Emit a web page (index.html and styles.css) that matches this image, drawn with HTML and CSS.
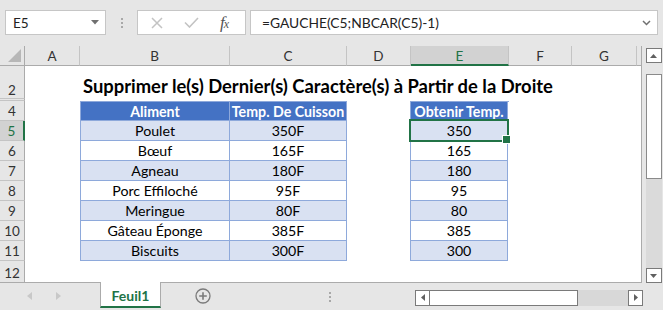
FILE: index.html
```html
<!DOCTYPE html>
<html lang="fr">
<head>
<meta charset="utf-8">
<title>Feuil1</title>
<link rel="stylesheet" href="styles.css">
</head>
<body>
<div class="app">
  <div class="fbar">
    <div class="namebox">
      <span class="ref">E5</span>
      <svg class="nb-arrow" width="8" height="5" viewBox="0 0 8 5"><path d="M0 0h8L4 4.5z" fill="#707070"/></svg>
    </div>
    <div class="grip"><i></i><i></i><i></i></div>
    <div class="fxbox">
      <svg class="ic-x" width="12" height="12" viewBox="0 0 12 12"><path d="M1 1L11 11M11 1L1 11" stroke="#c3c3c3" stroke-width="1.5" fill="none"/></svg>
      <svg class="ic-ok" width="15" height="11" viewBox="0 0 15 11"><path d="M1 5.5L5.5 10L14 1" stroke="#c3c3c3" stroke-width="1.6" fill="none"/></svg>
      <span class="fx">f<small>x</small></span>
    </div>
    <div class="formula">
      <span class="ftext">=GAUCHE(C5;NBCAR(C5)-1)</span>
      <svg class="chev" width="9" height="6" viewBox="0 0 9 6"><path d="M1 1L4.5 4.5L8 1" stroke="#707070" stroke-width="1.5" fill="none"/></svg>
    </div>
  </div>

  <div class="main">
    <div class="sheet">
      <div class="ch corner"><svg width="13" height="13" viewBox="0 0 13 13"><path d="M13 0V13H0z" fill="#b7b7b7"/></svg></div>
      <div class="ch">A</div>
      <div class="ch">B</div>
      <div class="ch">C</div>
      <div class="ch">D</div>
      <div class="ch ch-sel">E</div>
      <div class="ch">F</div>
      <div class="ch">G</div>
      <div class="ch ch-end"></div>

      <div class="rh r2">2</div>
      <div class="rh r3"></div>
      <div class="rh r4">4</div>
      <div class="rh r5 rh-sel">5</div>
      <div class="rh r6">6</div>
      <div class="rh r7">7</div>
      <div class="rh r8">8</div>
      <div class="rh r9">9</div>
      <div class="rh r10">10</div>
      <div class="rh r11">11</div>
      <div class="rh r12">12</div>

      <div class="title">Supprimer le(s) Dernier(s) Caractère(s) à Partir de la Droite</div>

      <div class="tbl tbl-bc">
        <div class="th">Aliment</div><div class="th">Temp. De Cuisson</div>
        <div class="td band">Poulet</div><div class="td band">350F</div>
        <div class="td">Bœuf</div><div class="td">165F</div>
        <div class="td band">Agneau</div><div class="td band">180F</div>
        <div class="td">Porc Effiloché</div><div class="td">95F</div>
        <div class="td band">Meringue</div><div class="td band">80F</div>
        <div class="td">Gâteau Éponge</div><div class="td">385F</div>
        <div class="td band">Biscuits</div><div class="td band">300F</div>
      </div>

      <div class="tbl tbl-e">
        <div class="th">Obtenir Temp.</div>
        <div class="td band sel">350</div>
        <div class="td">165</div>
        <div class="td band">180</div>
        <div class="td">95</div>
        <div class="td band">80</div>
        <div class="td">385</div>
        <div class="td band">300</div>
      </div>
    </div>

    <div class="vscroll">
      <div class="sbtn up"><svg width="7" height="4" viewBox="0 0 7 4"><path d="M0 4L3.5 0L7 4z" fill="#606060"/></svg></div>
      <div class="vthumb"></div>
      <div class="vspace"></div>
      <div class="sbtn down"><svg width="7" height="4" viewBox="0 0 7 4"><path d="M0 0L3.5 4L7 0z" fill="#606060"/></svg></div>
    </div>
  </div>

  <div class="tabbar">
    <div class="nav">
      <svg width="5" height="8" viewBox="0 0 5 8"><path d="M5 0V8L0 4z" fill="#c8c8c8"/></svg>
      <svg width="5" height="8" viewBox="0 0 5 8"><path d="M0 0V8L5 4z" fill="#c8c8c8"/></svg>
    </div>
    <div class="tab">Feuil1</div>
    <div class="addsheet">
      <svg width="16" height="16" viewBox="0 0 16 16"><circle cx="8" cy="8" r="7" fill="none" stroke="#7a7a7a" stroke-width="1.3"/><path d="M8 4.2V11.8M4.2 8H11.8" stroke="#7a7a7a" stroke-width="1.6"/></svg>
    </div>
    <div class="hgrip"><i></i><i></i><i></i></div>
    <div class="hscroll">
      <div class="sbtn left"><svg width="4" height="7" viewBox="0 0 4 7"><path d="M4 0V7L0 3.5z" fill="#606060"/></svg></div>
      <div class="hthumb"></div>
      <div class="htrack"></div>
      <div class="sbtn right"><svg width="4" height="7" viewBox="0 0 4 7"><path d="M0 0V7L4 3.5z" fill="#606060"/></svg></div>
    </div>
  </div>
</div>
</body>
</html>
```

FILE: styles.css
```css
* { box-sizing: border-box; }
html, body { margin: 0; padding: 0; }
body {
  width: 663px;
  height: 310px;
  overflow: hidden;
  background: #e6e6e6;
  font-family: Lato, "Open Sans", sans-serif;
  color: #000;
}
.app { width: 663px; height: 310px; display: flex; flex-direction: column; }

/* formula bar */
.fbar {
  height: 46px;
  display: flex;
  align-items: flex-start;
  padding: 10px 5px 0 5px;
}
.namebox {
  width: 101px;
  height: 25px;
  background: #fff;
  border: 1px solid #c6c6c6;
  display: flex;
  align-items: center;
  justify-content: space-between;
  padding: 0 6px 0 7px;
  font-size: 13.5px;
  color: #222;
}
.grip {
  width: 31px;
  height: 25px;
  display: flex;
  flex-direction: column;
  align-items: center;
  justify-content: center;
  gap: 2px;
}
.grip i, .hgrip i { display: block; width: 2px; height: 2px; background: #a8a8a8; }
.fxbox {
  width: 109px;
  height: 25px;
  background: #fff;
  border: 1px solid #c6c6c6;
  display: flex;
  align-items: center;
  padding: 0 0 0 13px;
}
.ic-x { margin-right: 21px; }
.ic-ok { margin-right: 21px; }
.fx {
  font-family: "Liberation Serif", serif;
  font-style: italic;
  font-size: 17px;
  color: #555;
  letter-spacing: -1px;
}
.fx small { font-size: 12px; }
.formula {
  margin-left: 4px;
  width: 408px;
  height: 25px;
  background: #fff;
  border: 1px solid #c6c6c6;
  display: flex;
  align-items: center;
  justify-content: space-between;
  padding: 0 6px 0 11px;
  font-size: 13.8px;
  color: #222;
}

/* sheet */
.main { display: flex; height: 237px; }
.sheet {
  width: 642px;
  height: 237px;
  display: grid;
  grid-template-columns: 25px 55px 150px 117px 64px 98px 63px 65px 5px;
  grid-template-rows: 20px 33px 2px repeat(8, 20px) 22px;
  background: #fff;
  border-right: 1px solid #ababab;
  border-bottom: 1px solid #ababab;
  overflow: hidden;
  font-size: 14px;
}
.ch {
  grid-row: 1;
  background: #e6e6e6;
  border-right: 1px solid #c4c4c4;
  border-bottom: 1px solid #ababab;
  display: flex;
  align-items: center;
  justify-content: center;
  color: #333;
  font-size: 13.5px;
  padding-top: 1px;
}
.ch.corner { justify-content: flex-end; align-items: flex-end; padding: 0 3px 3px 0; border-right-color: #ababab; }
.ch.ch-end { border-right: none; }
.ch.ch-sel { background: #d2d2d2; border-bottom: 2px solid #217346; color: #217346; }
.rh {
  grid-column: 1;
  background: #e6e6e6;
  border-right: 1px solid #ababab;
  border-bottom: 1px solid #c4c4c4;
  display: flex;
  align-items: flex-end;
  justify-content: center;
  color: #333;
  font-size: 13.5px;
  line-height: 18px;
}
.rh.rh-sel { background: #d2d2d2; border-right: 2px solid #217346; color: #217346; }
.r2 { grid-row: 2; line-height: 16px; }
.r3 { grid-row: 3; }
.r4 { grid-row: 4; }
.r5 { grid-row: 5; }
.r6 { grid-row: 6; }
.r7 { grid-row: 7; }
.r8 { grid-row: 8; }
.r9 { grid-row: 9; }
.r10 { grid-row: 10; }
.r11 { grid-row: 11; }
.r12 { grid-row: 12; }

.title {
  grid-row: 2;
  grid-column: 3 / 9;
  align-self: end;
  padding: 0 0 1px 3px;
  font-weight: 700;
  font-size: 18.4px;
  line-height: 24px;
  white-space: nowrap;
}

.tbl {
  grid-row: 4 / 12;
  display: grid;
  grid-template-rows: 19px repeat(7, 20px);
  border-left: 1px solid #8ea9db;
  border-top: 1px solid #8ea9db;
}
.tbl-bc { grid-column: 3 / 5; grid-template-columns: 149px 117px; }
.tbl-e { grid-column: 6; grid-template-columns: 97px; margin-left: -1px; }
.th, .td {
  border-right: 1px solid #8ea9db;
  border-bottom: 1px solid #8ea9db;
  display: flex;
  align-items: center;
  justify-content: center;
  white-space: nowrap;
  font-size: 14.2px;
}
.th { background: #4472c4; color: #fff; font-weight: 700; }
.td { background: #fff; }
.td.band { background: #d9e1f2; }
.td.sel { position: relative; }
.td.sel::after {
  content: "";
  position: absolute;
  left: -2px; top: -2px; right: -2px; bottom: -2px;
  border: 2px solid #217346;
  z-index: 2;
}
.td.sel::before {
  content: "";
  position: absolute;
  right: -4px; bottom: -4px;
  width: 7px; height: 7px;
  background: #217346;
  border: 1px solid #fff;
  z-index: 3;
}

/* vertical scroll */
.vscroll {
  width: 21px;
  display: flex;
  flex-direction: column;
  align-items: center;
  padding: 2px 0 0 2px;
  background: #e6e6e6;
}
.sbtn {
  width: 16px;
  height: 15px;
  background: #fff;
  border: 1px solid #7a7a7a;
  display: flex;
  align-items: center;
  justify-content: center;
  flex-shrink: 0;
}
.vthumb {
  width: 16px;
  height: 105px;
  margin-top: 11px;
  background: #fff;
  border: 1px solid #8a8a8a;
  flex-shrink: 0;
}
.vspace { flex: 1; width: 16px; background: #dadada; }

/* tab bar */
.tabbar {
  height: 27px;
  display: flex;
  align-items: flex-start;
}
.nav {
  width: 100px;
  height: 26px;
  display: flex;
  align-items: center;
  gap: 24px;
  padding-left: 27px;
}
.tab {
  width: 61px;
  height: 26px;
  margin-top: -1px;
  background: #fff;
  border-left: 1px solid #ababab;
  border-right: 1px solid #ababab;
  border-bottom: 2px solid #217346;
  color: #217346;
  font-weight: 700;
  font-size: 14px;
  display: flex;
  align-items: center;
  justify-content: center;
  padding-top: 2px;
}
.addsheet {
  width: 84px;
  height: 26px;
  display: flex;
  align-items: center;
  padding-left: 34px;
}
.hgrip {
  width: 170px;
  height: 26px;
  display: flex;
  flex-direction: column;
  align-items: center;
  justify-content: center;
  gap: 2px;
  padding-top: 1px;
}
.hscroll {
  display: flex;
  align-items: center;
  height: 15px;
  margin-top: 7px;
}
.hscroll .sbtn { width: 15px; height: 16px; }
.hthumb { width: 148px; height: 16px; background: #fff; border: 1px solid #7a7a7a; border-left: none; }
.htrack { width: 50px; height: 16px; background: #d8d8d8; }
```
